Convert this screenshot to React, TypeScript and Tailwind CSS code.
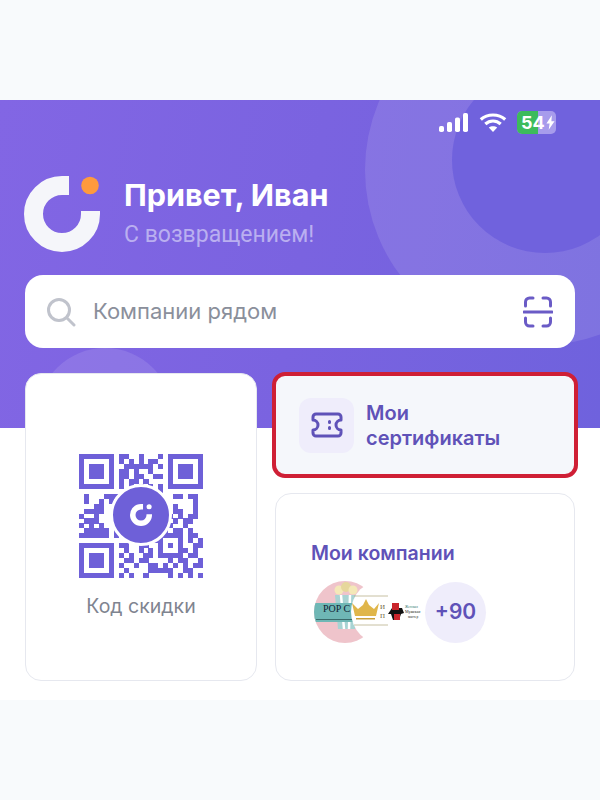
const FONT = "font-['Inter','Noto_Sans',sans-serif]";

const QR = [
  "1111111011001000101111111",
  "1000001010101011001000001",
  "1011101001111110101011101",
  "1011101011010010001011101",
  "1011101011011001101011101",
  "1000001010110100001000001",
  "1111111010101010101111111",
  "0000000001101100100000000",
  "0100011100000000000110110",
  "0100101000000000100000010",
  "0001100000000000010100010",
  "0111100000000000010110010",
  "1001000000000000001010110",
  "0111000000000000000101100",
  "1010100000000000001001000",
  "0111110100000000010110100",
  "1111110100000000111110110",
  "0000000000000001100010101",
  "1111111011001100101010011",
  "1000001001001010100011010",
  "1011101010100110111110110",
  "1011101001101100001011001",
  "1011101010010011010101011",
  "1000001001000011111001100",
  "1111111010100100001010101",
];

function Logo({ className, stroke = "#f5f6fa", dot = "#ff9a3d" }: { className?: string; stroke?: string; dot?: string }) {
  return (
    <svg viewBox="0 0 76 76" className={className}>
      <path d="M45 9.5 H38 A28.5 28.5 0 1 0 66.5 38 V35" fill="none" stroke={stroke} strokeWidth="19" />
      <circle cx="66" cy="9.5" r="8.8" fill={dot} />
    </svg>
  );
}

function QrCode() {
  return (
    <div className="relative h-[124px] w-[124px]">
      <svg viewBox="0 0 25 25" className="h-full w-full" shapeRendering="crispEdges">
        {QR.flatMap((row, y) =>
          row.split("").map((c, x) => (c === "1" ? <rect key={`${x}-${y}`} x={x} y={y} width="1.02" height="1.02" fill="#6e60d8" /> : null))
        )}
      </svg>
      <div className="absolute left-[31px] top-[30px] flex h-[62px] w-[62px] items-center justify-center rounded-full border-[3px] border-white bg-[#6e60d8]">
        <Logo className="h-[22px] w-[22px]" stroke="#ffffff" dot="#ffffff" />
      </div>
    </div>
  );
}

function StatusBar() {
  return (
    <div className="flex items-center justify-end gap-[10px] pr-[44px] pt-[11px]">
      <svg viewBox="0 0 30 22" className="h-[22px] w-[30px]" fill="#ffffff">
        <rect x="0" y="14" width="5" height="6" rx="1.8" />
        <rect x="8" y="10" width="5" height="10" rx="1.8" />
        <rect x="16" y="5.5" width="5" height="14.5" rx="1.8" />
        <rect x="24" y="1" width="5" height="19" rx="1.8" />
      </svg>
      <svg viewBox="0 0 28 22" className="h-[22px] w-[28px]" fill="none" stroke="#ffffff" strokeWidth="3.2">
        <path d="M1.8 7.5 C8.5 1.5 19.5 1.5 26.2 7.5" />
        <path d="M6.3 12 C10.8 8 17.2 8 21.7 12" />
        <path d="M14 20 L9.8 15.6 C12 13.8 16 13.8 18.2 15.6 Z" fill="#ffffff" stroke="none" />
      </svg>
      <div className="relative flex h-[23px] w-[39px] items-center overflow-hidden rounded-[5px] bg-[#a79cec] pl-[4px]">
        <div className="absolute bottom-0 left-0 top-0 w-[21px] bg-[#3dbb5c]" />
        <span className={`relative text-[18px] font-bold leading-none text-white ${FONT}`}>54</span>
        <svg viewBox="0 0 10 16" className="relative ml-[1px] h-[15px] w-[9px]" fill="#ffffff">
          <path d="M6.5 0 L0.5 9 H4 L3 16 L9.5 6.5 H6 Z" />
        </svg>
      </div>
    </div>
  );
}

function Header() {
  return (
    <div className="relative h-[328px] overflow-hidden bg-[linear-gradient(100deg,#8266e4_0%,#7a63e0_50%,#6f62dd_100%)]">
      <div className="absolute left-[365px] top-[-105px] h-[350px] w-[350px] rounded-full bg-white/[0.11]" />
      <div className="absolute left-[452px] top-[-33px] h-[186px] w-[186px] rounded-full bg-[#7062dd]" />
      <div className="absolute left-[37px] top-[248px] h-[136px] w-[136px] rounded-full bg-white/[0.11]" />
      <div className="relative">
        <StatusBar />
        <div className="mt-[42px] flex items-center gap-[24px] pl-[24px]">
          <Logo className="h-[76px] w-[76px]" />
          <div className={`-mt-[3px] ${FONT}`}>
            <div className="text-[30.5px] font-bold leading-[36px] text-white">Привет, Иван</div>
            <div className="mt-[9px] font-['Roboto',sans-serif] text-[23px] leading-[26px] text-[#baaff0]">С возвращением!</div>
          </div>
        </div>
        <div className="mx-[25px] mt-[23px] flex h-[73px] items-center justify-between rounded-[18px] bg-white pl-[21px] pr-[22px]">
          <div className="flex items-center gap-[17px]">
            <svg viewBox="0 0 30 30" className="h-[30px] w-[30px]" fill="none" stroke="#c0c3cc" strokeWidth="3" strokeLinecap="round">
              <circle cx="13" cy="13" r="10.5" />
              <path d="M21.5 21.5 L28 28" />
            </svg>
            <span className={`text-[22px] text-[#8a8f9b] ${FONT}`}>Компании рядом</span>
          </div>
          <svg viewBox="0 0 30 32" className="h-[32px] w-[30px]" fill="none" stroke="#6a5bc6" strokeWidth="3" strokeLinecap="round" strokeLinejoin="round">
            <path d="M2.5 10 V6 A4 4 0 0 1 6.500 2 H10" />
            <path d="M20 2 H23.500 A4 4 0 0 1 27.500 6 V10" />
            <path d="M1 16 H29" />
            <path d="M2.500 22 V26 A4 4 0 0 0 6.500 30 H10" />
            <path d="M20 30 H23.500 A4 4 0 0 0 27.500 26 V22" />
          </svg>
        </div>
      </div>
    </div>
  );
}

function Avatars() {
  return (
    <div className="mt-[15px] flex items-center pl-[38px]">
      <svg viewBox="0 0 116 62" className="h-[62px] w-[116px]">
        <defs>
          <clipPath id="pink">
            <circle cx="31" cy="31" r="31" />
          </clipPath>
        </defs>
        <g clipPath="url(#pink)">
          <rect width="62" height="62" fill="#efc4cb" />
          <path d="M21 14 L42 14 L41 48 L24 48 Z" fill="#a9d3d3" />
          <path d="M27 14 L30 48 M36 14 L35 48" stroke="#ffffff" strokeWidth="2.500" />
          <circle cx="25" cy="9" r="4.500" fill="#f4e8b8" />
          <circle cx="32" cy="6" r="5" fill="#e6d79c" />
          <circle cx="39" cy="9" r="4.500" fill="#f4e8b8" />
          <rect x="0" y="22" width="62" height="19" fill="#6fb7b5" />
          <text x="9" y="31" fontSize="10" fontFamily="Liberation Serif, serif" fill="#123">POP C</text>
          <rect x="2" y="38" width="36" height="1" fill="#3a6a6a" />
        </g>
        <circle cx="69" cy="31" r="32" fill="#ffffff" />
        <path d="M40 15 H74 M40 44 H74" stroke="#b9b08a" strokeWidth="0.800" />
        <path d="M38 22 L44 28 L49 24 L52 18 L55 24 L60 28 L65 22 L62 35 H41 Z" fill="#e0b64a" />
        <rect x="42" y="37" width="19" height="1.500" fill="#c9a03c" />
        <text x="66" y="28" fontSize="7" fontFamily="Liberation Serif, serif" fill="#6d5f3b">И</text>
        <text x="66" y="37" fontSize="7" fontFamily="Liberation Serif, serif" fill="#6d5f3b">П</text>
        <path d="M74 33 L78 27 H88 L90 32 L87 33 L85 39 H79 L77 33 Z" fill="#111111" />
        <rect x="78" y="22" width="7" height="7" fill="#c9252c" />
        <rect x="80" y="33" width="6" height="6" fill="#c9252c" />
        <text x="91" y="27" fontSize="3.500" fontFamily="Liberation Serif, serif" fill="#2f7a6e">Женская</text>
        <text x="91" y="32" fontSize="4" fontFamily="Liberation Serif, serif" fill="#222222">Мужская</text>
        <text x="94" y="37" fontSize="3.500" fontFamily="Liberation Serif, serif" fill="#222222">мастер</text>
      </svg>
      <div className={`-ml-[5px] flex h-[61px] w-[61px] items-center justify-center rounded-full bg-[#efedfb] text-[21px] font-semibold text-[#5f52b8] ${FONT}`}>
        +90
      </div>
    </div>
  );
}

export default function App() {
  return (
    <div className="h-[800px] w-[600px] overflow-hidden bg-[#f8fafc]">
      <div className="h-[100px]" />
      <div className="h-[600px] bg-white">
        <Header />
        <div className="relative -mt-[55px] flex gap-[18px] pl-[25px] pr-[25px]">
          <div className={`flex h-[308px] w-[232px] flex-col items-center rounded-[16px] border border-[#e6e8ef] bg-white pt-[80px] ${FONT}`}>
            <QrCode />
            <div className="mt-[14px] text-[19.5px] text-[#7f8490]">Код скидки</div>
          </div>
          <div className="flex flex-1 flex-col">
            <div className="-mx-[3px] -mt-[1px] flex h-[106px] items-center gap-[12px] rounded-[13px] border-4 border-[#cf1f35] bg-[#f5f7fb] pl-[23px]">
              <div className="flex h-[55px] w-[55px] items-center justify-center rounded-[12px] bg-[#efedfb]">
                <svg viewBox="0 0 32 26" className="h-[26px] w-[32px]" fill="none" stroke="#5f52b8" strokeWidth="3" strokeLinejoin="round" strokeLinecap="round">
                  <path d="M5 2 H27 A3 3 0 0 1 30 5 V8 A5 5 0 0 0 30 18 V21 A3 3 0 0 1 27 24 H5 A3 3 0 0 1 2 21 V18 A5 5 0 0 0 2 8 V5 A3 3 0 0 1 5 2 Z" />
                  <path d="M18.500 9.500 V10.500 M18.500 15.500 V16.500" />
                </svg>
              </div>
              <div className={`pt-[2px] text-[20px] font-semibold leading-[25px] text-[#5f52b8] ${FONT}`}>
                Мои
                <br />
                сертификаты
              </div>
            </div>
            <div className="mt-[15px] h-[188px] rounded-[16px] border border-[#e6e8ef] bg-white pt-[46px]">
              <div className={`pl-[35px] text-[19.5px] font-semibold leading-[26px] text-[#5f52b8] ${FONT}`}>Мои компании</div>
              <Avatars />
            </div>
          </div>
        </div>
      </div>
    </div>
  );
}
